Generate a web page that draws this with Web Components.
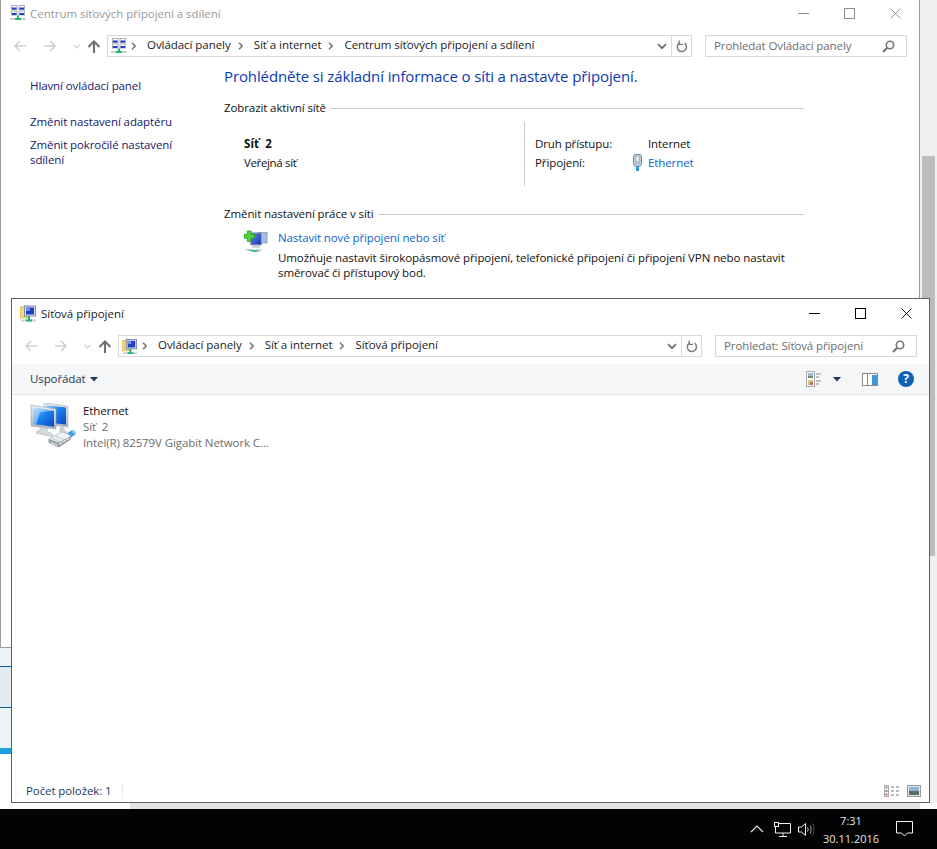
<!DOCTYPE html>
<html lang="cs">
<head>
<meta charset="utf-8">
<title>Síťová připojení</title>
<style>
  html, body { margin: 0; padding: 0; background: #fff; }
  body { font: 12px "Open Sans", "Noto Sans", sans-serif; }
</style>
</head>
<body>
<desktop-view>
  <stray-backdrop></stray-backdrop>

  <explorer-window style="--x:0px;--y:-2px;--w:920px;--h:650px;--frame:#9a9a9a;--title:#999;--ctl:#8c8c8c;--ctl-gap:1px"
    label="Centrum síťových připojení a sdílení" icon="panel" search="Prohledat Ovládací panely"
    crumbs="Ovládací panely|Síť a internet|Centrum síťových připojení a sdílení">
    <sharing-center></sharing-center>
  </explorer-window>

  <explorer-window style="--x:11px;--y:298px;--w:919px;--h:505px;--frame:#5f5f5f;--title:#1a1a1a;--ctl:#000;--ctl-gap:0px"
    label="Síťová připojení" icon="folder" search="Prohledat: Síťová připojení"
    crumbs="Ovládací panely|Síť a internet|Síťová připojení">
    <connections-list></connections-list>
  </explorer-window>

  <task-bar slot="bar"></task-bar>
</desktop-view>

<script>
const ICONS = {
  back: `<svg width="14" height="12" viewBox="0 0 14 12"><path d="M13 6H2M7 1L2 6l5 5" fill="none" stroke="#cfcfcf" stroke-width="1.6"/></svg>`,
  forward: `<svg width="14" height="12" viewBox="0 0 14 12"><path d="M1 6h11M7 1l5 5-5 5" fill="none" stroke="#cfcfcf" stroke-width="1.6"/></svg>`,
  down: `<svg width="7" height="5" viewBox="0 0 7 5"><path d="M.5 1l3 3 3-3" fill="none" stroke="#d0d0d0" stroke-width="1.2"/></svg>`,
  up: `<svg width="14" height="13" viewBox="0 0 14 13"><path d="M7 13V2M1.5 7L7 1.5 12.500 7" fill="none" stroke="#6f6f6f" stroke-width="2"/></svg>`,
  sep: `<svg width="6" height="8" viewBox="0 0 6 8"><path d="M1 .8L4.200 4 1 7.200" fill="none" stroke="#777" stroke-width="1.600"/></svg>`,
  chevron: `<svg width="10" height="7" viewBox="0 0 10 7"><path d="M1 1.200l4 4 4-4" fill="none" stroke="#6d6d6d" stroke-width="1.700"/></svg>`,
  refresh: `<svg width="12" height="13" viewBox="0 0 12 13"><path d="M8.600 3.200A4.600 4.600 0 1 1 3.300 3.100" fill="none" stroke="#7c7c7c" stroke-width="1.500"/><path d="M3.200 .6v3.800h3.800" fill="none" stroke="#7c7c7c" stroke-width="1.400"/></svg>`,
  search: `<svg width="13" height="13" viewBox="0 0 13 13"><circle cx="8" cy="5" r="3.700" fill="none" stroke="#757575" stroke-width="1.600"/><path d="M5.200 7.800L1 12" stroke="#757575" stroke-width="2.200"/></svg>`,
  panel: `<svg width="16" height="16" viewBox="0 0 16 16">
    <g fill="#fff" stroke="#a7aebb"><rect x="1.500" y=".5" width="5.500" height="4"/><rect x="9" y=".5" width="5.500" height="4"/><rect x="1.500" y="6" width="5.500" height="4"/><rect x="9" y="6" width="5.500" height="4"/></g>
    <g fill="#1f3fc4"><rect x="2" y="2.500" width="4.500" height="2"/><rect x="9.500" y="2.500" width="4.500" height="2"/><rect x="2" y="8" width="4.500" height="2"/><rect x="9.500" y="8" width="4.500" height="2"/></g>
    <rect x="0" y="13" width="16" height="2" fill="#cfd3d0"/><path d="M7 10.500h2V13h2v2H5v-2h2z" fill="#1fb56d"/></svg>`,
  folder: `<svg width="17" height="17" viewBox="0 0 17 17">
    <path d="M0 2h3l1-1h5v12H0z" fill="#f3d77b" stroke="#c9a94b" stroke-width=".6"/>
    <rect x="4.500" y="1" width="11" height="10" fill="#dfe6f2" stroke="#7d8aa6"/>
    <rect x="6" y="2.500" width="8" height="7" fill="#1b3fc0"/><rect x="6" y="2.500" width="4" height="3.500" fill="#6f8fe6"/>
    <rect x="1" y="14.500" width="15" height="2" fill="#cfd3d0"/><path d="M8 11h2v3.500h2v2H6v-2h2z" fill="#1fb56d"/></svg>`,
  plug: `<svg width="9" height="17" viewBox="0 0 9 17">
    <path d="M1.500 .5h6l1 1v9l-1.500 2H2L.5 10.500v-9z" fill="#b6c9d8" stroke="#7a8fa3"/>
    <rect x="3" y="2" width="3" height="6" fill="#eef3f7" stroke="#8aa0b2" stroke-width=".6"/>
    <rect x="3" y="13" width="3" height="4" fill="#2f9ae0"/></svg>`,
  addnet: `<svg width="25" height="25" viewBox="0 0 25 25">
    <defs><linearGradient id="s" x1="0" y1="0" x2="1" y2="1"><stop offset="0" stop-color="#6f8fe8"/><stop offset="1" stop-color="#0c2fb4"/></linearGradient></defs>
    <rect x="15" y="2" width="9" height="11" fill="#a9bbe6" stroke="#9aa4b8"/>
    <rect x="7" y="2.500" width="11" height="12.500" fill="url(#s)" stroke="#8e98ac"/>
    <path d="M9 15h7l1 3H8z" fill="#c8ccd2"/>
    <path d="M3.500 .5h4v3.500H11v4H7.500v3.500h-4V8H0V4h3.500z" fill="#4bd43a" stroke="#1d8a1c" stroke-width=".7"/>
    <path d="M1 19l12 1 6-1-2 3-5 1-11-3z" fill="#c9ccc9"/><path d="M3 20l9 .5 3-.8-1.500 2.300-3 .2z" fill="#20b565"/></svg>`,
  ethernet: `<svg width="46" height="47" viewBox="0 0 46 47">
    <defs>
      <linearGradient id="scr" x1="0" y1="0" x2="1" y2="1"><stop offset="0" stop-color="#a8d8fa"/><stop offset=".42" stop-color="#1f86ee"/><stop offset="1" stop-color="#0a45c4"/></linearGradient>
      <linearGradient id="frm" x1="0" y1="0" x2="0" y2="1"><stop offset="0" stop-color="#eef1f5"/><stop offset="1" stop-color="#aab2bd"/></linearGradient>
    </defs>
    <path d="M14 0l24 3v21l-24-3z" fill="url(#frm)" stroke="#a3acb8" stroke-width=".6"/>
    <path d="M16 2l20 2.500v17l-20-2z" fill="url(#scr)"/>
    <path d="M30 23l4 .5 1 4 4 2v1.500l-10-2z" fill="#c9cfd6"/>
    <path d="M1 2l25 4v20L1 23z" fill="url(#frm)" stroke="#98a2ae" stroke-width=".6"/>
    <path d="M3 4.500l21 3.200v16L3 21z" fill="url(#scr)"/>
    <path d="M3 4.500l21 3.200-14 1.500-4 12-3-.2z" fill="#dff0fd" opacity=".45"/>
    <path d="M10 24l7 1 .5 3.500 5 2.500v2.500l-16-3v-2l3.500-1z" fill="#d3d8de" stroke="#a4acb6" stroke-width=".5"/>
    <path d="M37 33l2-4 3-2 3 1 1 3-3 2-3 2z" fill="#2f9fe6"/><path d="M41 27.500l3-.5 2 3-2 1.500z" fill="#86d0f6"/>
    <path d="M19 36l13-7 9 3.500-1 4-11 7.500-10-4.500z" fill="#9aa6ae" stroke="#77838c" stroke-width=".7"/>
    <path d="M19 36l13-7 9 3.500-12 7z" fill="#eef1f3"/>
    <path d="M21.500 35l9 3.800M25 33l9 3.800" stroke="#b8c1c7" stroke-width=".8"/>
    <path d="M21 39.500l3 1.400M24.500 41l2.500 1.200M29.500 41.500l2.500-1.700M33 39l2.500-1.700M36.500 36.700l2.500-1.700" stroke="#f2f4f5" stroke-width="1.100"/></svg>`,
  views: `<svg width="18" height="16" viewBox="0 0 18 16">
    <rect x=".5" y=".5" width="8" height="15" fill="#f7f7f7" stroke="#a8a8a8"/>
    <rect x="2" y="2" width="5" height="5" fill="#9dbdd6"/><rect x="2" y="5" width="5" height="2" fill="#6c8a76"/>
    <rect x="2" y="9" width="5" height="5" fill="#d6c78d"/><rect x="4" y="11" width="3" height="3" fill="#c0705a"/>
    <path d="M10 3h5M10 6h3M10 10h5M10 13h3" stroke="#8a8a8a"/></svg>`,
  caret: `<svg width="8" height="5" viewBox="0 0 8 5"><path d="M0 0h8L4 4.500z" fill="#1e395b"/></svg>`,
  pane: `<svg width="16" height="13" viewBox="0 0 16 13">
    <rect x=".5" y=".5" width="15" height="12" fill="#fff" stroke="#8a8a8a"/>
    <rect x="5" y="1" width="1" height="11" fill="#8a8a8a"/><rect x="10" y="2" width="5" height="10" fill="#3d95e0"/></svg>`,
  details: `<svg width="16" height="12" viewBox="0 0 16 12">
    <rect x=".5" y=".5" width="4" height="11" fill="#fff" stroke="#aaa"/>
    <rect x="1.500" y="1.500" width="2" height="2" fill="#8a8a8a"/><rect x="1.500" y="5" width="2" height="2" fill="#5a8fc0"/><rect x="1.500" y="8.500" width="2" height="2" fill="#c05a4a"/>
    <path d="M7 2h3M12 2h3M7 6h3M12 6h3M7 10h3M12 10h3" stroke="#777"/></svg>`,
  tiles: `<svg width="14" height="12" viewBox="0 0 14 12">
    <rect x=".5" y=".5" width="13" height="11" fill="#dde6ee" stroke="#9a9a9a"/>
    <rect x="2" y="2" width="10" height="4" fill="#8fb5d2"/><rect x="2" y="6" width="10" height="4" fill="#56705f"/></svg>`,
  tbChevron: `<svg width="14" height="8" viewBox="0 0 14 8"><path d="M1 7l6-6 6 6" fill="none" stroke="#e6e6e6" stroke-width="1.200"/></svg>`,
  tbNet: `<svg width="17" height="15" viewBox="0 0 17 15"><g fill="none" stroke="#f0f0f0"><path d="M4.500 1.500h12v9.500h-15V5"/><path d="M9 11v3M5 14.500h8"/><rect x=".5" y=".5" width="4" height="4"/></g></svg>`,
  tbVol: `<svg width="17" height="15" viewBox="0 0 17 15"><g fill="none" stroke="#f0f0f0"><path d="M.5 5h3L7.500 1.500v12L3.500 10h-3z"/><path d="M9.500 5.500c.8 1.200.8 2.800 0 4"/></g><path d="M12 3.500c1.500 2.400 1.500 5.600 0 8" fill="none" stroke="#b5b5b5"/><path d="M14.500 1.500c2 3.500 2 8.500 0 12" fill="none" stroke="#555"/></svg>`,
  tbNote: `<svg width="17" height="16" viewBox="0 0 17 16"><path d="M.5 .5h16v11.500h-5l-3 3-3-3h-5z" fill="none" stroke="#f4f4f4"/></svg>`
};

class UiIcon extends HTMLElement {
  constructor () {
    super();
    this.attachShadow({ mode: 'open' });
  }

  connectedCallback () {
    this.shadowRoot.innerHTML = `
      <style>
        :host { display: inline-flex; align-items: center; justify-content: center; flex: none; }
        svg { display: block; }
      </style>
      ${ICONS[this.getAttribute('name')] || ''}`;
  }
}

class DesktopView extends HTMLElement {
  constructor () {
    super();
    this.attachShadow({ mode: 'open' }).innerHTML = `
      <style>
        :host { display: flex; flex-direction: column; position: relative; width: 937px; height: 849px; overflow: hidden; background: #fff; }
        .canvas { flex: 1; }
      </style>
      <div class="canvas"><slot></slot></div>
      <slot name="bar"></slot>`;
  }
}

// pieces of the windows lying behind the two explorer windows
class StrayBackdrop extends HTMLElement {
  constructor () {
    super();
    this.attachShadow({ mode: 'open' }).innerHTML = `
      <style>
        :host { display: block; }
        div { position: absolute; }
        .track { left: 920px; top: 0; width: 17px; height: 803px; background: #f0f0f0; }
        .thumb { left: 922px; top: 156px; width: 13px; height: 400px; background: #bcbcbc; }
        .strip { left: 130px; top: 803px; width: 790px; height: 6px; background: #e4e4e4; }
        .rows { left: 0; top: 648px; width: 12px; display: flex; flex-direction: column; }
        .rows i { display: block; border-bottom: 1px solid #0b5c8e; }
        .rows i:nth-child(1) { height: 18px; background: #eaf3f7; }
        .rows i:nth-child(2) { height: 40px; background: #e1ebf1; }
        .rows i:nth-child(3) { height: 40px; background: #ebf3f6; border: 0; }
        .rows i:nth-child(4) { height: 6px; background: #1ba1e2; border: 0; }
      </style>
      <div class="track"></div>
      <div class="thumb"></div>
      <div class="strip"></div>
      <div class="rows"><i></i><i></i><i></i><i></i></div>`;
  }
}

class WinControls extends HTMLElement {
  constructor () {
    super();
    this.attachShadow({ mode: 'open' }).innerHTML = `
      <style>
        :host { display: flex; margin-left: auto; color: var(--ctl); }
        span { width: 46px; height: 28px; display: flex; align-items: center; justify-content: center; }
        svg { display: block; }
      </style>
      <span><svg width="11" height="11" viewBox="0 0 11 11"><path d="M0 5.500h11" stroke="currentColor"/></svg></span>
      <span><svg width="11" height="11" viewBox="0 0 11 11"><rect x=".5" y=".5" width="10" height="10" fill="none" stroke="currentColor"/></svg></span>
      <span><svg width="11" height="11" viewBox="0 0 11 11"><path d="M.5 .5l10 10M10.500 .5l-10 10" stroke="currentColor" stroke-width=".9"/></svg></span>`;
  }
}

class NavBar extends HTMLElement {
  connectedCallback () {
    const crumbs = this.getAttribute('crumbs').split('|');
    const icon = this.getAttribute('icon');
    const search = this.getAttribute('search');
    const trail = crumbs.map(c => `<ui-icon name="sep"></ui-icon><span class="crumb">${c}</span>`).join('');
    this.attachShadow({ mode: 'open' }).innerHTML = `
      <style>
        :host { display: flex; height: 22px; margin: 6px 12px 7px 0; color: #1a1a1a; }
        .btns { width: 106px; flex: none; display: grid; grid-template-columns: 30px 30px 14px 18px; padding-left: 12px; box-sizing: border-box; align-items: center; justify-items: start; }
        .address { flex: 1; min-width: 0; display: flex; align-items: center; border: 1px solid #d9d9d9; box-sizing: border-box; }
        .address > .home { width: 16px; margin: 0 4px 0 3px; }
        .trail { flex: 1; display: flex; align-items: center; min-width: 0; white-space: nowrap; }
        .trail ui-icon { width: 6px; margin-right: 10px; }
        .crumb { margin: 0 7px 2px 0; font-size: 11.500px; letter-spacing: -.05px; line-height: 18px; }
        .end { width: 19px; height: 20px; display: flex; align-items: center; justify-content: center; }
        .refresh { border-left: 1px solid #d9d9d9; width: 19px; }
        .search { width: 202px; flex: none; margin-left: 13px; border: 1px solid #d9d9d9; box-sizing: border-box; display: flex; align-items: center; padding: 0 11px 0 8px; color: #6d6d6d; font-size: 11.500px; letter-spacing: -.1px; }
        .search span { margin-bottom: 2px; }
        .search ui-icon { margin-left: auto; }
      </style>
      <div class="btns">
        <ui-icon name="back"></ui-icon><ui-icon name="forward"></ui-icon><ui-icon name="down"></ui-icon><ui-icon name="up"></ui-icon>
      </div>
      <div class="address">
        <ui-icon class="home" name="${icon}"></ui-icon>
        <div class="trail">${trail}</div>
        <div class="end"><ui-icon name="chevron"></ui-icon></div>
        <div class="end refresh"><ui-icon name="refresh"></ui-icon></div>
      </div>
      <div class="search"><span>${search}</span><ui-icon name="search"></ui-icon></div>`;
  }
}

class ExplorerWindow extends HTMLElement {
  connectedCallback () {
    const label = this.getAttribute('label');
    const icon = this.getAttribute('icon');
    this.attachShadow({ mode: 'open' }).innerHTML = `
      <style>
        :host { position: absolute; left: var(--x); top: var(--y); width: var(--w); height: var(--h); box-sizing: border-box; border: 1px solid var(--frame); background: #fff; display: flex; flex-direction: column; }
        .title { height: 30px; box-sizing: border-box; padding: 0 0 2px 8px; display: flex; align-items: center; flex: none; }
        .title ui-icon { width: 17px; margin-right: 4px; }
        .title span { color: var(--title); font-size: 11.500px; letter-spacing: -.03px; }
        win-controls { margin-right: var(--ctl-gap); }
        .body { flex: 1; min-height: 0; display: flex; flex-direction: column; }
        ::slotted(*) { flex: 1; min-height: 0; }
      </style>
      <div class="title"><ui-icon name="${icon}"></ui-icon><span>${label}</span><win-controls></win-controls></div>
      <nav-bar icon="${icon}" crumbs="${this.getAttribute('crumbs')}" search="${this.getAttribute('search')}"></nav-bar>
      <div class="body"><slot></slot></div>`;
  }
}

class SectionHead extends HTMLElement {
  constructor () {
    super();
    this.attachShadow({ mode: 'open' }).innerHTML = `
      <style>
        :host { display: flex; align-items: center; gap: 5px; line-height: 16px; color: #111; font-size: 11.500px; letter-spacing: -.1px; white-space: nowrap; }
        i { flex: 1; height: 1px; background: #c9c9c9; margin-top: 1px; }
      </style>
      <slot></slot><i></i>`;
  }
}

class SharingCenter extends HTMLElement {
  constructor () {
    super();
    this.attachShadow({ mode: 'open' }).innerHTML = `
      <style>
        :host { display: grid; grid-template-columns: 223px 580px; align-content: start; font-size: 11.500px; letter-spacing: -.1px; color: #111; }
        aside { padding: 14px 0 0 29px; line-height: 15px; color: #15186b; display: flex; flex-direction: column; }
        aside a:nth-child(2) { margin-top: 21px; }
        aside a:nth-child(3) { margin-top: 8px; }
        main { padding-top: 2px; }
        h1 { margin: 0 0 14px; font-weight: 400; font-size: 15px; letter-spacing: -.11px; line-height: 20px; color: #0a3bb5; white-space: nowrap; }
        .net { display: grid; grid-template-columns: 301px 1fr; height: 64px; margin: 6px 0 20px; }
        .who { padding: 12px 0 0 20px; line-height: 19px; border-right: 1px solid #c9c9c9; }
        .who b { display: block; font-weight: 700; letter-spacing: .1px; }
        .who span { letter-spacing: -.35px; }
        .facts { display: grid; grid-template-columns: 98px 15px 1fr; align-content: start; padding: 12px 0 0 10px; line-height: 19px; }
        .facts ui-icon { justify-content: flex-start; }
        .link { color: #0a66cc; }
        .task { display: flex; gap: 10px; margin: 8px 0 0 20px; }
        .task ui-icon { align-items: flex-start; width: 24px; }
        .task a { display: block; line-height: 16px; }
        .task p { margin: 4px 0 0; line-height: 15px; white-space: nowrap; letter-spacing: -.08px; }
      </style>
      <aside>
        <a>Hlavní ovládací panel</a>
        <a>Změnit nastavení adaptéru</a>
        <a>Změnit pokročilé nastavení<br>sdílení</a>
      </aside>
      <main>
        <h1>Prohlédněte si základní informace o síti a nastavte připojení.</h1>
        <section-head>Zobrazit aktivní sítě</section-head>
        <div class="net">
          <div class="who"><b>Síť&nbsp; 2</b><span>Veřejná síť</span></div>
          <div class="facts">
            <span>Druh přístupu:</span><span></span><span>Internet</span>
            <span>Připojení:</span><ui-icon name="plug"></ui-icon><a class="link">Ethernet</a>
          </div>
        </div>
        <section-head>Změnit nastavení práce v síti</section-head>
        <div class="task">
          <ui-icon name="addnet"></ui-icon>
          <div>
            <a class="link">Nastavit nové připojení nebo síť</a>
            <p>Umožňuje nastavit širokopásmové připojení, telefonické připojení či připojení VPN nebo nastavit<br>směrovač či přístupový bod.</p>
          </div>
        </div>
      </main>`;
  }
}

class ConnectionsList extends HTMLElement {
  constructor () {
    super();
    this.attachShadow({ mode: 'open' }).innerHTML = `
      <style>
        :host { display: flex; flex-direction: column; font-size: 11.500px; letter-spacing: -.1px; }
        .tools { height: 30px; flex: none; background: #f5f6f7; border-bottom: 1px solid #e5e5e5; display: flex; align-items: center; padding: 0 15px 0 18px; color: #1e395b; }
        .tools .lbl { margin-bottom: 2px; }
        .tools .org { margin-left: 4px; }
        .tools .v { margin-left: auto; }
        .tools .c { margin-left: 9px; }
        .tools .p { margin-left: 21px; }
        .help { margin-left: 20px; width: 16px; height: 16px; border-radius: 50%; background: #0a63b8; color: #fff; font: 700 12px/16px "Open Sans", sans-serif; text-align: center; }
        .items { flex: 1; padding: 8px 0 0 18px; display: flex; gap: 7px; align-items: flex-start; }
        .txt { line-height: 15.500px; color: #6d6d6d; white-space: nowrap; }
        .txt b { font-weight: 400; color: #111; display: block; }
        .txt span { display: block; }
        .txt span + span { margin-top: 1px; }
        .status { height: 22px; flex: none; display: flex; align-items: center; padding: 0 8px 0 14px; color: #1e395b; }
        .status .n { width: 96px; border-right: 1px solid #e8e8e8; line-height: 14px; white-space: nowrap; }
        .status .d { margin-left: auto; }
        .status .t { margin-left: 7px; }
      </style>
      <div class="tools">
        <span class="lbl">Uspořádat</span><ui-icon class="org" name="caret"></ui-icon>
        <ui-icon class="v" name="views"></ui-icon><ui-icon class="c" name="caret"></ui-icon>
        <ui-icon class="p" name="pane"></ui-icon><span class="help">?</span>
      </div>
      <div class="items">
        <ui-icon name="ethernet"></ui-icon>
        <div class="txt"><b>Ethernet</b><span>Síť&nbsp; 2</span><span>Intel(R) 82579V Gigabit Network C...</span></div>
      </div>
      <div class="status">
        <span class="n">Počet položek: 1</span>
        <ui-icon class="d" name="details"></ui-icon><ui-icon class="t" name="tiles"></ui-icon>
      </div>`;
  }
}

class TaskBar extends HTMLElement {
  constructor () {
    super();
    this.attachShadow({ mode: 'open' }).innerHTML = `
      <style>
        :host { display: flex; flex: none; height: 40px; background: #030303; align-items: center; justify-content: flex-end; padding-right: 9px; color: #e4e4e4; }
        .tray { width: 24px; }
        .first { width: 26px; }
        .clock { width: 58px; margin-left: 4px; padding-top: 2px; text-align: center; font-size: 11px; line-height: 18px; white-space: nowrap; }
        .note { width: 48px; }
      </style>
      <ui-icon class="first" name="tbChevron"></ui-icon>
      <ui-icon class="tray" name="tbNet"></ui-icon>
      <ui-icon class="tray" name="tbVol"></ui-icon>
      <div class="clock">7:31<br>30.11.2016</div>
      <ui-icon class="note" name="tbNote"></ui-icon>`;
  }
}

customElements.define('ui-icon', UiIcon);
customElements.define('desktop-view', DesktopView);
customElements.define('stray-backdrop', StrayBackdrop);
customElements.define('win-controls', WinControls);
customElements.define('nav-bar', NavBar);
customElements.define('explorer-window', ExplorerWindow);
customElements.define('section-head', SectionHead);
customElements.define('sharing-center', SharingCenter);
customElements.define('connections-list', ConnectionsList);
customElements.define('task-bar', TaskBar);
</script>
</body>
</html>
